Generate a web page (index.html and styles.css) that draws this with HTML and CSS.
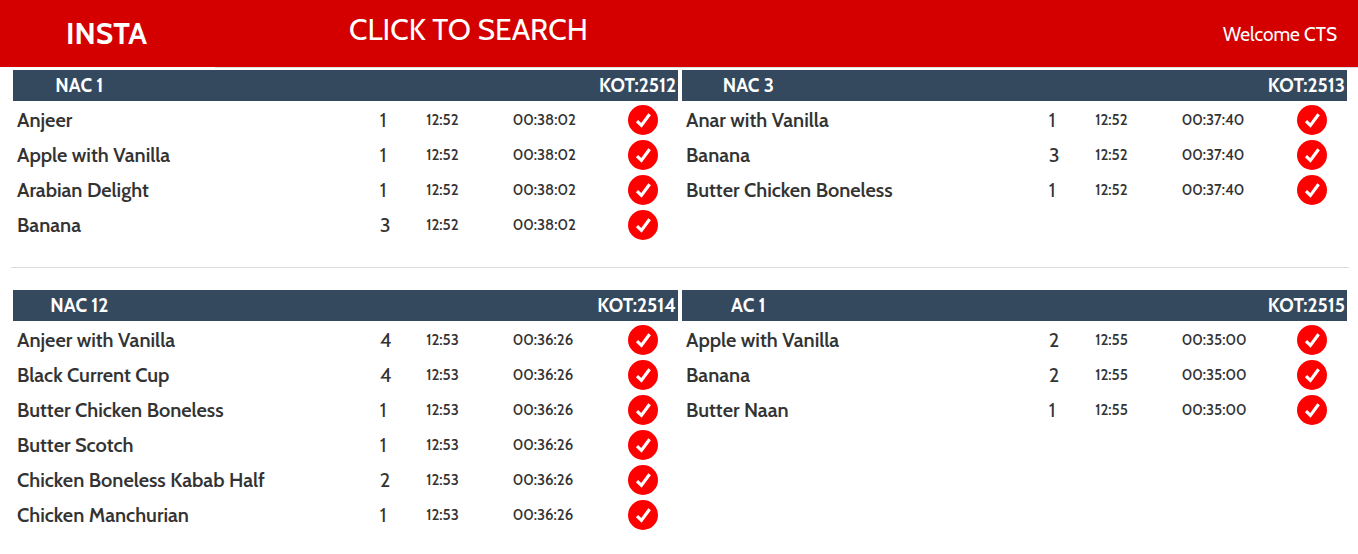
FILE: index.html
```html
<!DOCTYPE html>
<html lang="en">
<head>
    <meta charset="UTF-8">
    <meta name="viewport" content="width=device-width, initial-scale=1.0">
    <title>Insta</title>
    <link rel="stylesheet" href="styles.css">
</head>
<body>
    <svg class="sprite" aria-hidden="true">
        <symbol id="check" viewBox="0 0 30 30">
            <circle cx="15" cy="15" r="15" fill="#ff0000"/>
            <path d="M9 16.2 L13.4 20.4 L21.6 9.2" fill="none" stroke="#fff" stroke-width="3.2"/>
        </symbol>
    </svg>

    <header>
        <a class="logo" href="#">INSTA</a>
        <div class="navbar">
            <button class="search" type="button">CLICK TO SEARCH</button>
            <span class="welcome">Welcome CTS</span>
        </div>
    </header>

    <main>
        <div class="orders">
            <section class="order">
                <div class="order-head"><span class="place">NAC 1</span><span>KOT:2512</span></div>
                <table>
                    <tr><td class="item">Anjeer</td><td class="qty">1</td><td class="time">12:52</td><td class="elapsed">00:38:02</td><td class="action"><button class="done" type="button" aria-label="Done"><svg><use href="#check"/></svg></button></td></tr>
                    <tr><td class="item">Apple with Vanilla</td><td class="qty">1</td><td class="time">12:52</td><td class="elapsed">00:38:02</td><td class="action"><button class="done" type="button" aria-label="Done"><svg><use href="#check"/></svg></button></td></tr>
                    <tr><td class="item">Arabian Delight</td><td class="qty">1</td><td class="time">12:52</td><td class="elapsed">00:38:02</td><td class="action"><button class="done" type="button" aria-label="Done"><svg><use href="#check"/></svg></button></td></tr>
                    <tr><td class="item">Banana</td><td class="qty">3</td><td class="time">12:52</td><td class="elapsed">00:38:02</td><td class="action"><button class="done" type="button" aria-label="Done"><svg><use href="#check"/></svg></button></td></tr>
                </table>
            </section>
            <section class="order">
                <div class="order-head"><span class="place">NAC 3</span><span>KOT:2513</span></div>
                <table>
                    <tr><td class="item">Anar with Vanilla</td><td class="qty">1</td><td class="time">12:52</td><td class="elapsed">00:37:40</td><td class="action"><button class="done" type="button" aria-label="Done"><svg><use href="#check"/></svg></button></td></tr>
                    <tr><td class="item">Banana</td><td class="qty">3</td><td class="time">12:52</td><td class="elapsed">00:37:40</td><td class="action"><button class="done" type="button" aria-label="Done"><svg><use href="#check"/></svg></button></td></tr>
                    <tr><td class="item">Butter Chicken Boneless</td><td class="qty">1</td><td class="time">12:52</td><td class="elapsed">00:37:40</td><td class="action"><button class="done" type="button" aria-label="Done"><svg><use href="#check"/></svg></button></td></tr>
                </table>
            </section>
        </div>

        <div class="orders">
            <section class="order">
                <div class="order-head"><span class="place">NAC 12</span><span>KOT:2514</span></div>
                <table>
                    <tr><td class="item">Anjeer with Vanilla</td><td class="qty">4</td><td class="time">12:53</td><td class="elapsed">00:36:26</td><td class="action"><button class="done" type="button" aria-label="Done"><svg><use href="#check"/></svg></button></td></tr>
                    <tr><td class="item">Black Current Cup</td><td class="qty">4</td><td class="time">12:53</td><td class="elapsed">00:36:26</td><td class="action"><button class="done" type="button" aria-label="Done"><svg><use href="#check"/></svg></button></td></tr>
                    <tr><td class="item">Butter Chicken Boneless</td><td class="qty">1</td><td class="time">12:53</td><td class="elapsed">00:36:26</td><td class="action"><button class="done" type="button" aria-label="Done"><svg><use href="#check"/></svg></button></td></tr>
                    <tr><td class="item">Butter Scotch</td><td class="qty">1</td><td class="time">12:53</td><td class="elapsed">00:36:26</td><td class="action"><button class="done" type="button" aria-label="Done"><svg><use href="#check"/></svg></button></td></tr>
                    <tr><td class="item">Chicken Boneless Kabab Half</td><td class="qty">2</td><td class="time">12:53</td><td class="elapsed">00:36:26</td><td class="action"><button class="done" type="button" aria-label="Done"><svg><use href="#check"/></svg></button></td></tr>
                    <tr><td class="item">Chicken Manchurian</td><td class="qty">1</td><td class="time">12:53</td><td class="elapsed">00:36:26</td><td class="action"><button class="done" type="button" aria-label="Done"><svg><use href="#check"/></svg></button></td></tr>
                </table>
            </section>
            <section class="order">
                <div class="order-head"><span class="place">AC 1</span><span>KOT:2515</span></div>
                <table>
                    <tr><td class="item">Apple with Vanilla</td><td class="qty">2</td><td class="time">12:55</td><td class="elapsed">00:35:00</td><td class="action"><button class="done" type="button" aria-label="Done"><svg><use href="#check"/></svg></button></td></tr>
                    <tr><td class="item">Banana</td><td class="qty">2</td><td class="time">12:55</td><td class="elapsed">00:35:00</td><td class="action"><button class="done" type="button" aria-label="Done"><svg><use href="#check"/></svg></button></td></tr>
                    <tr><td class="item">Butter Naan</td><td class="qty">1</td><td class="time">12:55</td><td class="elapsed">00:35:00</td><td class="action"><button class="done" type="button" aria-label="Done"><svg><use href="#check"/></svg></button></td></tr>
                </table>
            </section>
        </div>
    </main>
</body>
</html>
```

FILE: styles.css
```css
*{
    box-sizing: border-box;
}

body{
    margin: 0;
    background: #fff;
    color: #333;
    font-family: Cabin, Lato, sans-serif;
    font-size: 19px;
}

.sprite{
    display: none;
}

header{
    display: flex;
    align-items: flex-start;
    color: #fff;
}

.logo{
    width: 215px;
    height: 67px;
    padding-right: 2px;
    background: #d40000;
    color: #fff;
    font-size: 30px;
    font-weight: bold;
    line-height: 67px;
    text-align: center;
    text-decoration: none;
}

.navbar{
    flex: 1;
    display: flex;
    justify-content: space-between;
    height: 68px;
    padding: 0 21px 0 134px;
    background: #d40000;
    border-bottom: 1px solid #ddd;
}

.search{
    padding: 0;
    border: 0;
    background: none;
    color: #fff;
    font-family: inherit;
    font-size: 30px;
    line-height: 60px;
    height: 60px;
    cursor: pointer;
}

.welcome{
    line-height: 69px;
}

main{
    padding: 2px 9px 0 11px;
}

.orders{
    display: grid;
    grid-template-columns: 1fr 1fr;
    gap: 4px;
    padding: 0 2px 25px;
}

.orders + .orders{
    border-top: 1px solid #ddd;
    padding-top: 22px;
}

.order-head{
    display: flex;
    justify-content: space-between;
    padding-right: 2px;
    margin-bottom: 1px;
    background: #34495e;
    color: #fff;
    font-weight: bold;
    line-height: 31px;
}

.place{
    width: 20%;
    text-align: center;
}

table{
    width: 100%;
    table-layout: fixed;
    border-collapse: collapse;
}

td{
    height: 35px;
    padding: 0;
}

.item{
    width: 55%;
    padding-left: 4px;
    font-size: 20px;
    font-weight: 600;
}

.qty{
    width: 7%;
    padding-left: 1px;
    font-size: 20px;
}

.time{
    width: 13%;
    padding-left: 1px;
    font-size: 15px;
    font-weight: 500;
}

.elapsed{
    width: 17%;
    padding-left: 1px;
    font-size: 15px;
    font-weight: 500;
}

.action{
    width: 8%;
    padding-left: 3px;
}

.done{
    display: block;
    width: 30px;
    height: 30px;
    padding: 0;
    border: 0;
    background: none;
    cursor: pointer;
}

.done svg{
    display: block;
    width: 30px;
    height: 30px;
}
```
